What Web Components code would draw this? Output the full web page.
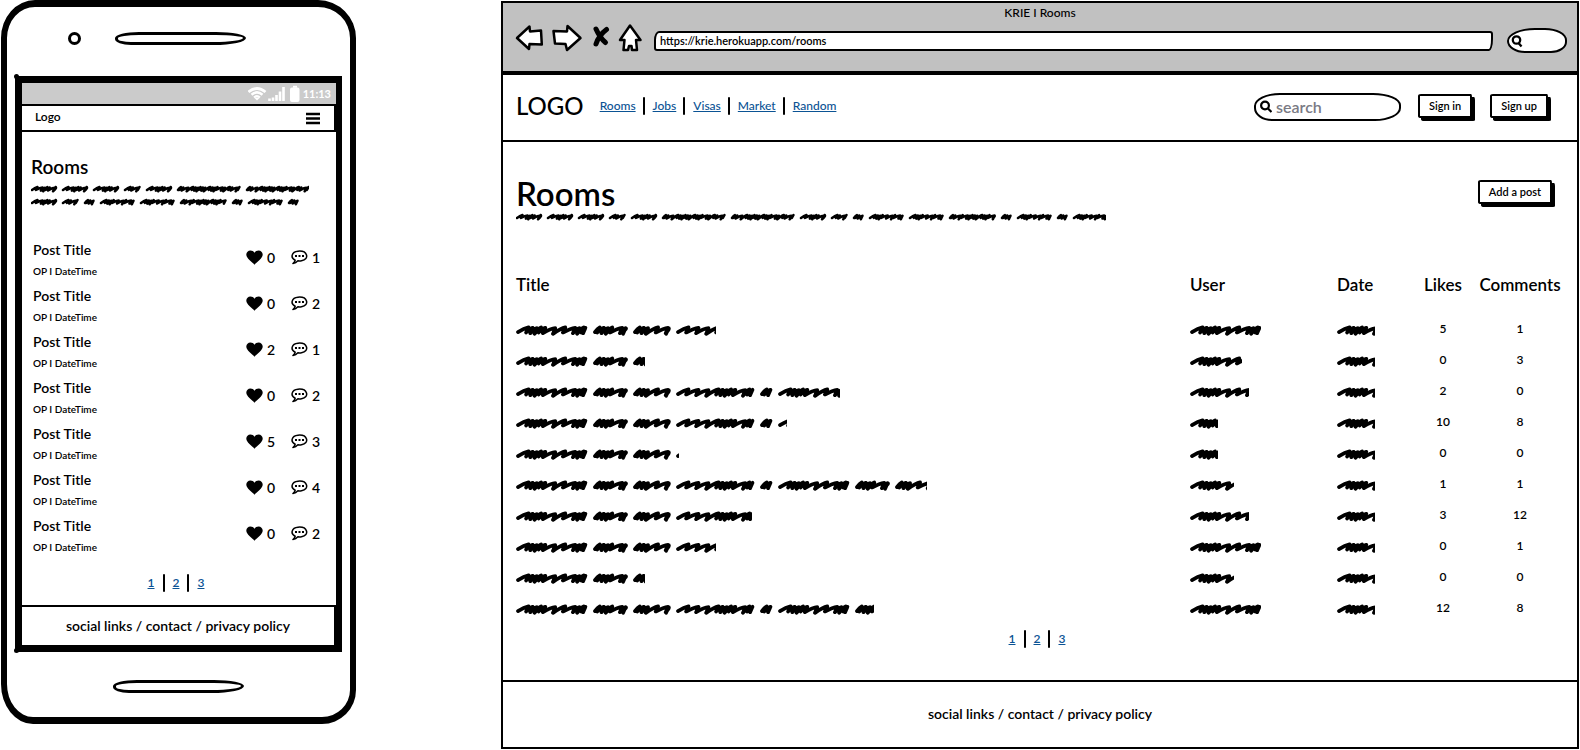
<!DOCTYPE html>
<html lang="en">
<head>
<meta charset="utf-8">
<title>KRIE | Rooms</title>
<style>
  body {
    margin: 0;
    background: #fff;
    color: #000;
    font: 600 14px/20px Lato, "Noto Sans", sans-serif;
    --ink: #000;
    --link: #0b5394;
  }
  main {
    display: grid;
    grid-template-columns: 355px minmax(0, 1fr);
    align-items: start;
    gap: 145px;
    padding: 0 1px;
  }
</style>
</head>
<body>
<main>
  <phone-frame>
    <status-bar slot="status">11:13</status-bar>
    <phone-nav slot="nav">Logo</phone-nav>
    <rooms-intro compact heading="Rooms"></rooms-intro>
    <post-list></post-list>
    <page-links></page-links>
    <site-footer slot="footer" compact>social links / contact / privacy policy</site-footer>
  </phone-frame>
  <browser-frame heading="KRIE I Rooms" address="https://krie.herokuapp.com/rooms">
    <site-nav></site-nav>
    <rooms-intro heading="Rooms"><sketch-button>Add a post</sketch-button></rooms-intro>
    <rooms-table></rooms-table>
    <page-links></page-links>
    <site-footer slot="footer">social links / contact / privacy policy</site-footer>
  </browser-frame>
</main>
<script>
const define = (name, render) => customElements.define(name, class extends HTMLElement {
  constructor() {
    super();
    this.attachShadow({ mode: 'open' });
  }
  connectedCallback() {
    this.shadowRoot.innerHTML =
      '<style>*{box-sizing:border-box} a{color:var(--link)}</style>' + render(this);
  }
});

/* One scribbled word: w = wide zigzag, n = narrow zigzag packed into a blob. */
const wordPath = (x, width, shape, mid, amp, wide, narrow, inset) => {
  let at = x + inset, i = 0;
  let d = `M${at} ${mid + amp * .6}`;
  const end = x + width - inset - 1;
  while (at < end) {
    const s = shape[i % shape.length] === 'w' ? wide : narrow;
    const nx = Math.min(at + s, end);
    const j = (i % 3) - 1;
    d += `Q${at + s * .6} ${mid - amp * .8} ${nx + .5} ${mid - amp + j * .4}L${nx - amp * .7} ${mid + amp + j * .7}`;
    at = nx;
    i++;
  }
  return d;
};
const LARGE = [[0, 72, 'wnnnnwwwnnnn'], [77, 35, 'nnnnww'], [117, 38, 'nnnwwnnn'],
  [160, 79, 'wwwwnnnnwnnww'], [244, 13, 'nnn']];
const SMALL_1 = [26, 26, 26, 17, 26, 64, 64];
const SMALL_2 = [26, 17, 11, 35, 35, 47, 11, 35, 11];
const SHAPES = { 26: 'wwnnnw', 17: 'wnwnw', 11: 'nnw', 64: 'nnwwnnnnnwnnnwnwnw', 35: 'wnnnwwnw', 47: 'nnwnwnnnnwn' };
const smallLine = words => {
  let x = 0, d = '';
  for (const w of words) { d += wordPath(x, w, SHAPES[w], 6, 1.6, 5, 2.4, 1); x += w + 5; }
  return d;
};
const largeLine = () => {
  let d = '';
  for (const off of [0, 262]) for (const [x, w, s] of LARGE) d += wordPath(x + off, w, s, 6.5, 2.7, 10, 4.2, 2);
  return d;
};
const scribble = (width, kind) => {
  const d = kind === 'large' ? largeLine()
    : smallLine(kind === 'one' ? SMALL_1 : kind === 'two' ? SMALL_2 : [...SMALL_1, ...SMALL_2, 35]);
  return `<svg width="${width}" height="13" fill="none" stroke="currentColor" stroke-linecap="round" stroke-linejoin="round"
    stroke-width="${kind === 'large' ? 3.7 : 2.5}" aria-hidden="true"><path d="${d}"/></svg>`;
};

define('scribble-text', el => `
  <style>:host{display:block;height:13px;overflow:hidden} svg{display:block}</style>
  ${scribble(el.getAttribute('width'), el.getAttribute('kind') || 'large')}`);

define('sketch-button', () => `
  <style>
    :host{display:block}
    button{display:block;height:24px;padding:0 9px;border:2px solid var(--ink);border-radius:3px 1px 2px 3px/2px 3px 1px 2px;
      background:#fff;color:inherit;font:inherit;font-size:11px;line-height:20px;box-shadow:3px 3px 0 var(--ink);white-space:nowrap}
  </style>
  <button type="button"><slot></slot></button>`);

define('page-links', () => `
  <style>
    :host{display:block}
    nav{display:flex;justify-content:center;align-items:center;height:18px;padding-right:6px;font-size:12px;line-height:18px}
    a{padding:0 8px}
    i{width:2px;height:18px;background:var(--ink);border-radius:1px}
  </style>
  <nav aria-label="Pages"><a href="#1">1</a><i></i><a href="#2">2</a><i></i><a href="#3">3</a></nav>`);

define('site-footer', el => {
  const compact = el.hasAttribute('compact');
  return `
  <style>
    :host{display:block}
    footer{display:flex;align-items:center;justify-content:center;white-space:nowrap;font-size:14px;
      padding:${compact ? '9px 0' : '22px 0 23px'};border-top:2px solid var(--ink);
      ${compact ? 'border-right:2px solid var(--ink);border-bottom:2px solid var(--ink);' : ''}}
  </style>
  <footer><slot></slot></footer>`;
});

define('rooms-intro', el => {
  const compact = el.hasAttribute('compact');
  return `
  <style>
    :host{display:block}
    header{display:flex;justify-content:space-between;align-items:flex-start;
      padding:${compact ? '23px 0 30px 9px' : '33px 25px 45px 13px'}}
    h1{margin:0;font-weight:600;font-size:${compact ? '19px' : '33px'};line-height:${compact ? '24px' : '36px'};
      padding-bottom:${compact ? '4px' : '0'}}
    .action{padding-top:5px}
  </style>
  <header>
    <div><h1>${el.getAttribute('heading')}</h1>${compact
      ? '<scribble-text kind="one" width="278"></scribble-text><scribble-text kind="two" width="278"></scribble-text>'
      : '<scribble-text kind="full" width="590"></scribble-text>'}</div>
    <div class="action"><slot></slot></div>
  </header>`;
});

/* ---------- phone ---------- */
define('phone-frame', () => `
  <style>
    :host{display:block}
    .body{border:6px solid var(--ink);border-top-width:7px;border-bottom-width:7px;
      border-radius:34px 38px 34px 32px/38px 38px 34px 40px;padding:0 8px 24px;background:#fff}
    .top{display:flex;height:69px;padding:25px 0 0 53px;gap:34px}
    .eye{width:13px;height:13px;border:3px solid var(--ink);border-radius:50%}
    .slit{width:131px;height:13px;border:3px solid var(--ink);border-radius:24px 30px 32px 16px/6px 6px 7px 6px}
    .screen{position:relative;border:7px solid var(--ink);border-right-width:6px;border-bottom-width:5px;background:#fff}
    .screen::before,.screen::after{content:"";position:absolute;left:-8px;width:5px;height:5px;border-radius:50%;background:var(--ink)}
    .screen::before{top:-9px} .screen::after{bottom:-6px}
    .content{padding-bottom:13px}
    .bottom{display:flex;justify-content:center;padding-top:28px}
  </style>
  <div class="body">
    <div class="top"><div class="eye"></div><div class="slit"></div></div>
    <div class="screen">
      <slot name="status"></slot><slot name="nav"></slot>
      <div class="content"><slot></slot></div>
      <slot name="footer"></slot>
    </div>
    <div class="bottom"><div class="slit"></div></div>
  </div>`);

define('status-bar', () => `
  <style>
    :host{display:block}
    div{display:flex;align-items:center;justify-content:flex-end;height:21px;padding-right:5px;background:#cbcbcb;color:#fff;
      font-size:11px;font-weight:700}
    svg{display:block;margin-right:3px}
  </style>
  <div>
    <svg width="52" height="18" viewBox="1 0 52 18" fill="none" stroke="#fff" aria-hidden="true">
      <path d="M1.500 7Q10 0 18.500 7" stroke-width="2.800"/><path d="M4.500 9.800Q10 5 15.500 9.800" stroke-width="2.500"/>
      <path d="M7 12.500Q10 10 13 12.500" stroke-width="2.200"/><path d="M7.500 13L10 15.500 12.500 13Z" fill="#fff" stroke="none"/>
      <path d="M22.500 16v-2.500M26 16v-3.500M29.500 16v-6M33 16V6.500M36.500 16V2" stroke-width="2.600"/>
      <rect x="44" y="3.500" width="7.500" height="12.500" rx="1" fill="#fff" stroke-width="2"/><path d="M46 1.800h4" stroke-width="2"/>
    </svg>
    <slot></slot>
  </div>`);

define('phone-nav', () => `
  <style>
    :host{display:block}
    nav{display:flex;align-items:center;justify-content:space-between;height:28px;padding:0 14px 0 13px;font-size:12px;
      border:2px solid var(--ink);border-left:0}
    span{padding-bottom:3px}
    button{display:block;padding:0;border:0;background:none} svg{display:block}
  </style>
  <nav><span><slot></slot></span>
    <button type="button" aria-label="Menu"><svg width="14" height="13" stroke="#000" stroke-width="2.500"><path d="M0 2h14M0 6.500h14M0 11h14"/></svg></button>
  </nav>`);

const HEART = `<svg width="17" height="15" viewBox="0 0 17 15"><path d="M8.500 14.700C6 12 .3 8.500.3 4.600.3 2 2.200.4 4.400.4c1.800 0 3.200.9 4.100 2.300C9.400 1.300 10.800.4 12.600.4c2.200 0 4.100 1.600 4.100 4.200C16.700 8.500 11 12 8.500 14.700Z"/></svg>`;
const COMMENT = `<svg width="17" height="15" viewBox="0 0 17 15"><path d="M4.200 10.200C-.8 8 .3 1.800 7 1.200c9.500-.9 12 8 3.500 9.500-1.500.3-2.500.2-3.600.1-1.400 1.600-3 2.400-5 2.700 1.300-.9 2.100-2 2.300-3.300Z" fill="none" stroke="#000" stroke-width="1.500" stroke-linejoin="round"/><path d="M4 5h2v2H4zM7.500 5h2v2h-2zM11 5h2v2h-2z"/></svg>`;

define('post-list', () => `
  <style>
    :host{display:block}
    ul{display:grid;gap:6px;margin:0;padding:0 16px 19px 11px;list-style:none}
    li{display:flex;justify-content:space-between;height:40px}
    h2{margin:0;font-weight:600;font-size:14px;line-height:22px} p{margin:0;font-size:10px;line-height:20px}
    .counts{display:grid;grid-template-columns:17px 28px 17px 12px;align-items:center;height:37px;font-size:14px}
    .counts b{font-weight:600;padding-left:4px} svg{display:block}
  </style>
  <ul>${[[0, 1], [0, 2], [2, 1], [0, 2], [5, 3], [0, 4], [0, 2]].map(([l, c]) => `
    <li><div><h2>Post Title</h2><p>OP I DateTime</p></div>
      <div class="counts">${HEART}<b>${l}</b>${COMMENT}<b>${c}</b></div></li>`).join('')}
  </ul>`);

/* ---------- browser ---------- */
define('browser-frame', el => `
  <style>
    :host{display:block;padding-top:1px}
    .frame{border:2px solid var(--ink);background:#fff}
    .bar{background:#c1c1c1;border-bottom:4px solid var(--ink);padding-bottom:15px}
    .title{padding-top:1px;font-size:12px;font-weight:500;line-height:18px;text-align:center}
    .tools{display:flex;align-items:center;height:34px;padding:0 10px 0 12px}
    .tools button{display:block;padding:0;border:0;background:none} .tools svg{display:block}
    .forward{margin-left:6px} .stop{margin-left:9px} .home{margin-left:8px}
    .url{flex:1;min-width:0;height:20px;margin:3px 14px 0 12px;padding:0 4px;border:2px solid var(--ink);
      border-radius:5px 3px 4px 3px/9px 3px 12px 3px;background:#fff;color:inherit;font:inherit;font-size:11px;line-height:16px}
    .find{display:flex;align-items:center;width:60px;height:25px;margin-top:3px;padding-left:2px;border:2px solid var(--ink);
      border-radius:28px 22px 16px 18px/13px 12px 11px 12px;background:#fff}
    .find svg{flex:none}
    .find input{width:100%;min-width:0;height:16px;padding:0;border:0;outline:0;background:none;font:inherit}
    .space{height:32px}
  </style>
  <div class="frame">
    <div class="bar">
      <div class="title">${el.getAttribute('heading')}</div>
      <div class="tools">
        <button class="back" type="button" aria-label="Back"><svg width="31" height="32" fill="#fff" stroke="#000" stroke-width="2.500" stroke-linejoin="round"><path d="M2 15 14.500 3.500l.5 5L26 7.500l.8 14-12.300-.5-.5 5Z"/></svg></button>
        <button class="forward" type="button" aria-label="Forward"><svg width="31" height="32" fill="#fff" stroke="#000" stroke-width="2.500" stroke-linejoin="round"><path d="M28.500 15 15.500 3l-.5 5.500L1.500 8 3 20.500 13.500 21l1.500 6Z"/></svg></button>
        <button class="stop" type="button" aria-label="Stop"><svg width="18" height="32" fill="none" stroke="#000" stroke-linecap="round"><path d="M4 6Q8 15 13.500 19.500M14.500 6.500Q7 12 4 21" stroke-width="5"/></svg></button>
        <button class="home" type="button" aria-label="Home"><svg width="24" height="32" fill="#fff" stroke="#000" stroke-width="2.500" stroke-linejoin="round"><path d="M12 2.500 2 17h4.500L5.500 27H10l1-4h2.500l.5 4h5l-1-10h4.500Z"/></svg></button>
        <input class="url" aria-label="Address" value="${el.getAttribute('address')}">
        <label class="find"><svg width="12" height="14" fill="none" stroke="#000" stroke-width="2.300"><circle cx="5.500" cy="6" r="3.700"/><path d="M7.500 9l3 3.500"/></svg><input aria-label="Web search"></label>
      </div>
    </div>
    <slot></slot>
    <div class="space"></div>
    <slot name="footer"></slot>
  </div>`);

define('site-nav', () => `
  <style>
    :host{display:block}
    header{display:flex;align-items:center;height:67px;padding:0 29px 4px 13px;border-bottom:2px solid var(--ink)}
    .logo{font-size:24px;font-weight:500;line-height:28px;margin-right:8px}
    nav{display:flex;align-items:center;flex:1;font-size:12px;font-weight:500;line-height:18px}
    nav a{padding:0 7px 0 8px} i{width:2px;height:18px;background:var(--ink);border-radius:1px}
    .search{display:flex;align-items:center;width:147px;height:28px;margin:2px 17px 0 0;padding-left:4px;gap:4px;border:2px solid var(--ink);
      border-radius:26px 28px 26px 18px/13px 12px 13px 13px}
    .search svg{flex:none}
    .search input{width:100%;min-width:0;padding:0;border:0;outline:0;background:none;font:inherit;font-size:16px}
    .search input::placeholder{color:#7a7a84;opacity:1}
    .buttons{display:flex;gap:18px;padding-top:1px}
  </style>
  <header>
    <div class="logo">LOGO</div>
    <nav aria-label="Sections">${['Rooms', 'Jobs', 'Visas', 'Market', 'Random'].map(t => `<a href="#${t}">${t}</a>`).join('<i></i>')}</nav>
    <label class="search"><svg width="12" height="13" fill="none" stroke="#000" stroke-width="2.200"><circle cx="5" cy="5.500" r="3.900"/><path d="M8 8.500l3.500 3.500"/></svg><input type="search" placeholder="search" aria-label="Search"></label>
    <div class="buttons"><sketch-button>Sign in</sketch-button><sketch-button>Sign up</sketch-button></div>
  </header>`);

define('rooms-table', () => `
  <style>
    :host{display:block;padding:0 15px 5px 13px}
    table{width:100%;border-collapse:collapse;table-layout:fixed;font-size:12px}
    th{height:46px;padding:0 0 15px;font-weight:600;font-size:17px;line-height:31px;text-align:left;white-space:nowrap}
    td{height:31px;padding:0 0 1px;line-height:20px} td.num{padding-bottom:4px}
    .num{text-align:center}
    .user{width:147px} .date{width:71px} .likes{width:70px} .comments{width:84px}
  </style>
  <table>
    <thead><tr><th>Title</th><th class="user">User</th><th class="date">Date</th><th class="likes num">Likes</th><th class="comments num">Comments</th></tr></thead>
    <tbody>${[[200, 71, 5, 1], [129, 52, 0, 3], [324, 59, 2, 0], [271, 28, 10, 8], [163, 28, 0, 0], [411, 44, 1, 1],
      [236, 59, 3, 12], [200, 71, 0, 1], [129, 44, 0, 0], [358, 71, 12, 8]].map(([t, u, l, c]) => `
      <tr><td><scribble-text width="${t}"></scribble-text></td><td><scribble-text width="${u}"></scribble-text></td>
      <td><scribble-text width="38"></scribble-text></td><td class="num">${l}</td><td class="num">${c}</td></tr>`).join('')}
    </tbody>
  </table>`);
</script>
</body>
</html>
